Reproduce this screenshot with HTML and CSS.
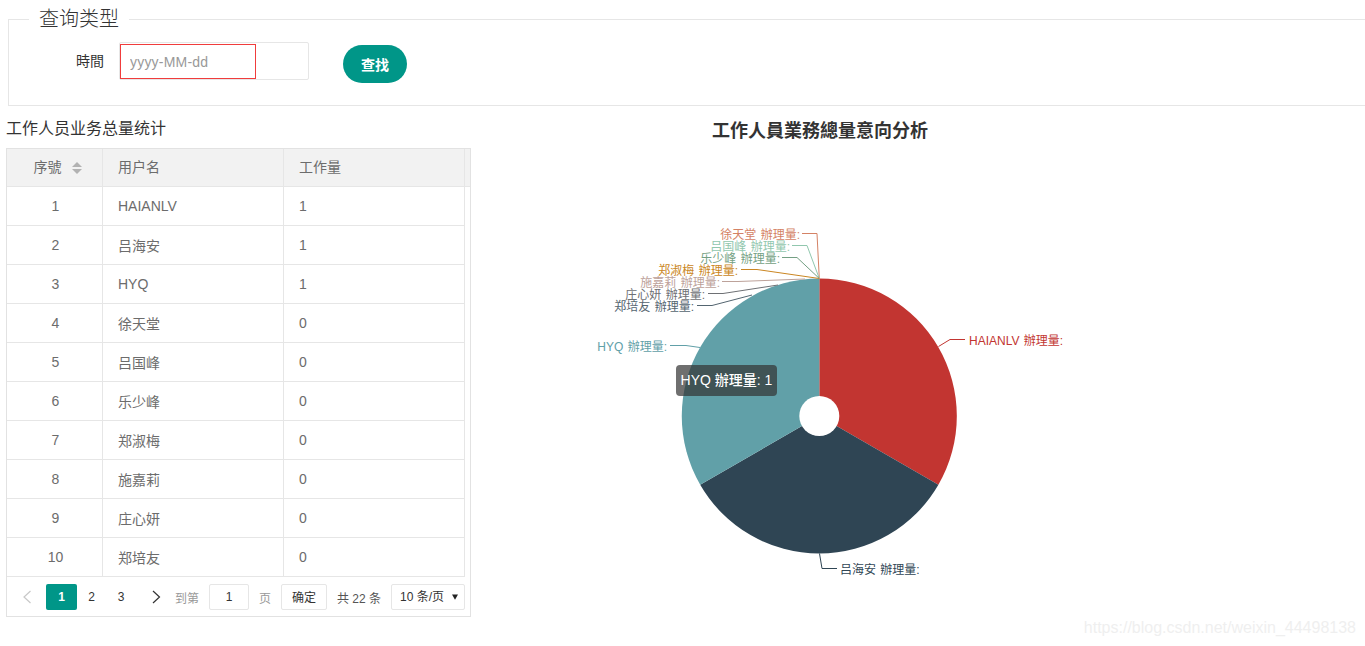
FILE: index.html
```html
<!DOCTYPE html>
<html lang="zh">
<head>
<meta charset="utf-8">
<title>工作人员业务总量统计</title>
<link rel="stylesheet" href="styles.css">
</head>
<body>
<fieldset class="query">
  <legend>查询类型</legend>
  <div class="query-row">
    <label class="query-label">時間</label>
    <div class="date-box"><input class="date-input" placeholder="yyyy-MM-dd"></div>
    <button class="search-btn">查找</button>
  </div>
</fieldset>
<main class="main">
  <section class="left">
    <h2 class="table-title">工作人员业务总量统计</h2>
    <div class="grid">
      <table class="tbl">
        <colgroup><col class="c1"><col class="c2"><col class="c3"><col class="c4"></colgroup>
        <thead>
          <tr>
            <th class="center head-num">序號<svg class="sort" width="10" height="12" viewBox="0 0 10 12"><path d="M5 0 10 5H0Z"/><path d="M5 12 0 7H10Z"/></svg></th>
            <th>用户名</th><th>工作量</th><th class="fill"></th>
          </tr>
        </thead>
        <tbody>
          <tr><td class="center">1</td><td>HAIANLV</td><td>1</td><td class="fill"></td></tr>
          <tr><td class="center">2</td><td>吕海安</td><td>1</td><td class="fill"></td></tr>
          <tr><td class="center">3</td><td>HYQ</td><td>1</td><td class="fill"></td></tr>
          <tr><td class="center">4</td><td>徐天堂</td><td>0</td><td class="fill"></td></tr>
          <tr><td class="center">5</td><td>吕国峰</td><td>0</td><td class="fill"></td></tr>
          <tr><td class="center">6</td><td>乐少峰</td><td>0</td><td class="fill"></td></tr>
          <tr><td class="center">7</td><td>郑淑梅</td><td>0</td><td class="fill"></td></tr>
          <tr><td class="center">8</td><td>施嘉莉</td><td>0</td><td class="fill"></td></tr>
          <tr><td class="center">9</td><td>庄心妍</td><td>0</td><td class="fill"></td></tr>
          <tr><td class="center">10</td><td>郑培友</td><td>0</td><td class="fill"></td></tr>
        </tbody>
      </table>
      <div class="pager">
        <span class="arrow"><svg width="12" height="14" viewBox="0 0 12 14"><path class="chev off" d="M9.500 1 3 7l6.500 6"/></svg></span>
        <span class="page current">1</span>
        <span class="page p2">2</span>
        <span class="page p3">3</span>
        <span class="arrow"><svg width="12" height="14" viewBox="0 0 12 14"><path class="chev" d="M3 1l6.500 6L3 13"/></svg></span>
        <span class="muted goto">到第</span>
        <span class="page-input">1</span>
        <span class="muted unit">页</span>
        <span class="ok">确定</span>
        <span class="total">共 22 条</span>
        <span class="size"><span class="size-text">10 条/页</span><svg class="caret" width="6" height="6" viewBox="0 0 8 7"><path d="M0 0H8L4 7Z"/></svg></span>
      </div>
    </div>
  </section>
  <section class="chart">
    <svg class="chart-svg" width="894" height="540" viewBox="471 106 894 540">
      <text class="chart-title" x="820" y="136.500">工作人員業務總量意向分析</text>
      <path class="s-red" d="M819.3 416V278.500A137.500 137.500 0 0 1 938.400 484.750Z"/>
      <path class="s-dark" d="M819.3 416 938.400 484.750A137.500 137.500 0 0 1 700.200 484.750Z"/>
      <path class="s-teal" d="M819.3 416 700.200 484.750A137.500 137.500 0 0 1 819.300 278.500Z"/>
      <circle class="hole" cx="819.300" cy="416" r="20"/>

      <polyline class="ln l-red" points="965,339.500 950,339.500 938.500,346.500"/>
      <polyline class="ln l-dark" points="837,568.500 822,568.500 819.500,553.500"/>
      <polyline class="ln l-teal" points="670,345.500 686,345.500 700,347.500"/>
      <polyline class="ln l-a" points="802,233.500 817,233.500 819.300,278.500"/>
      <polyline class="ln l-b" points="792,245.500 807,245.500 819.300,278.500"/>
      <polyline class="ln l-c" points="782,257.500 797,257.500 819.300,278.500"/>
      <polyline class="ln l-d" points="741,269.500 757,269.500 819.300,278.500"/>
      <polyline class="ln l-e" points="722,281.500 738,281.500 805,279"/>
      <polyline class="ln l-f" points="708,293.500 723,293.500 778,285"/>
      <polyline class="ln l-g" points="697,305.500 712,305.500 752,295"/>

      <text class="lbl f-red" x="969" y="344.500">HAIANLV 辦理量:</text>
      <text class="lbl f-dark" x="840" y="573.500">吕海安 辦理量:</text>
      <text class="lbl end f-teal" x="667" y="350.500">HYQ 辦理量:</text>
      <text class="lbl end f-a" x="800" y="238.500">徐天堂 辦理量:</text>
      <text class="lbl end f-b" x="790" y="250.500">吕国峰 辦理量:</text>
      <text class="lbl end f-c" x="780" y="262.500">乐少峰 辦理量:</text>
      <text class="lbl end f-d" x="738" y="274.500">郑淑梅 辦理量:</text>
      <text class="lbl end f-e" x="720" y="286.500">施嘉莉 辦理量:</text>
      <text class="lbl end f-f" x="705" y="298.500">庄心妍 辦理量:</text>
      <text class="lbl end f-g" x="694" y="310.500">郑培友 辦理量:</text>
    </svg>
    <div class="tooltip">HYQ 辦理量: 1</div>
  </section>
</main>
<div class="watermark">https://blog.csdn.net/weixin_44498138</div>
</body>
</html>
```
FILE: styles.css
```css
* { box-sizing: border-box; }
html, body { height: 100%; overflow: hidden; }
body {
  margin: 0;
  padding-top: 6px;
  position: relative;
  background: #fff;
  color: #333;
  font-family: "Liberation Sans", "Noto Sans CJK SC", sans-serif;
  font-size: 14px;
}

.query {
  margin: 0 -20px 0 8px;
  padding: 10px 0 22px;
  border: 1px solid #e6e6e6;
  min-width: 0;
}
.query legend {
  margin-left: 20px;
  padding: 0 10px;
  font-size: 20px;
  line-height: 26px;
  font-weight: 300;
}
.query-row { display: flex; align-items: flex-start; }
.query-label {
  width: 95px;
  text-align: right;
  line-height: 38px;
  margin-right: 15px;
}
.date-box {
  width: 190px;
  height: 38px;
  border: 1px solid #e6e6e6;
  border-radius: 2px;
  padding-top: 1px;
}
.date-input {
  display: block;
  width: 136px;
  height: 35px;
  margin-left: 0;
  padding: 0 9px;
  border: 1px solid #f03c3c;
  outline: 0;
  font: 14px "Liberation Sans", sans-serif;
  letter-spacing: .2px;
  color: #333;
}
.date-input::placeholder { color: #999; opacity: 1; }
.search-btn {
  width: 64px;
  height: 38px;
  margin: 3px 0 0 34px;
  border: 0;
  border-radius: 19px;
  background: #009688;
  color: #fff;
  font: bold 14px "Liberation Sans", "Noto Sans CJK SC", sans-serif;
}

.main { display: flex; align-items: flex-start; }
.left { width: 465px; margin-left: 6px; flex: none; }
.table-title {
  margin: 11px 0 9px;
  padding-top: 1px;
  height: 22px;
  font-size: 16px;
  line-height: 22px;
  font-weight: 400;
  color: #333;
}
.grid { width: 465px; border: 1px solid #e2e2e2; }
.tbl {
  width: 463px;
  table-layout: fixed;
  border-collapse: separate;
  border-spacing: 0;
  color: #6c6c6c;
}
.c1 { width: 96px; }
.c2, .c3 { width: 181px; }
.c4 { width: 5px; }
.tbl th, .tbl td {
  padding: 0 15px;
  border-right: 1px solid #e6e6e6;
  border-bottom: 1px solid #e6e6e6;
  font-weight: 400;
  text-align: left;
  overflow: hidden;
}
.tbl th { height: 38px; padding-bottom: 3px; background: #f2f2f2; }
.tbl td { height: 39px; }
.tbl .center { text-align: center; }
.tbl td.center { padding-left: 17px; }
.tbl .head-num { padding-left: 21px; }
.tbl .fill { padding: 0; border-right: 0; }
.tbl td.fill { border-bottom: 0; }
.sort { fill: #b2b2b2; margin-left: 10px; vertical-align: -2px; }

.pager {
  display: flex;
  align-items: center;
  height: 39px;
  padding: 7px 5px 6px 0;
  font-size: 12px;
  color: #333;
}
.arrow { width: 39px; display: flex; justify-content: center; }
.chev { fill: none; stroke: #333; stroke-width: 1.2; }
.chev.off { stroke: #c8c8c8; }
.page { height: 26px; line-height: 26px; text-align: center; }
.current {
  width: 31px;
  background: #009688;
  border-radius: 2px;
  color: #fff;
  font-weight: 700;
}
.p2 { width: 29px; }
.p3 { width: 30px; }
.muted { color: #999; }
.goto, .unit { margin-right: 10px; }
.page-input, .ok, .size {
  height: 26px;
  border: 1px solid #e6e6e6;
  border-radius: 2px;
  background: #fff;
}
.page-input { width: 40px; margin-right: 10px; line-height: 24px; text-align: center; }
.ok { width: 46px; line-height: 26px; text-align: center; }
.total { margin-left: 10px; color: #555; }
.size {
  width: 74px;
  margin-left: auto;
  padding-left: 8px;
  display: flex;
  align-items: center;
  justify-content: space-between;
  padding-right: 6px;
}
.size-text { line-height: 26px; }
.caret { fill: #222; }

.chart { position: relative; flex: 1; height: 540px; }
.chart-svg { display: block; }
.chart-title {
  font-size: 18px;
  font-weight: 700;
  fill: #333;
  text-anchor: middle;
}
.s-red { fill: #c23531; }
.s-dark { fill: #2f4554; }
.s-teal { fill: #61a0a8; }
.hole { fill: #fff; }
.ln { fill: none; stroke-width: 1; }
.lbl { font-size: 12px; word-spacing: 1px; }
.end { text-anchor: end; }
.l-red { stroke: #c23531; } .f-red { fill: #c23531; }
.l-dark { stroke: #2f4554; } .f-dark { fill: #2f4554; }
.l-teal { stroke: #61a0a8; } .f-teal { fill: #61a0a8; }
.l-a { stroke: #d48265; } .f-a { fill: #d48265; }
.l-b { stroke: #91c7ae; } .f-b { fill: #91c7ae; }
.l-c { stroke: #749f83; } .f-c { fill: #749f83; }
.l-d { stroke: #ca8622; } .f-d { fill: #ca8622; }
.l-e { stroke: #bda29a; } .f-e { fill: #bda29a; }
.l-f { stroke: #6e7074; } .f-f { fill: #6e7074; }
.l-g { stroke: #546570; } .f-g { fill: #546570; }

.tooltip {
  position: absolute;
  left: 205px;
  top: 259px;
  width: 101px;
  height: 31px;
  line-height: 31px;
  text-align: center;
  border-radius: 4px;
  background: rgba(50, 50, 50, .7);
  color: #fff;
  font-size: 14px;
  font-weight: 500;
  white-space: nowrap;
}

.watermark {
  position: absolute;
  right: 9px;
  top: 617px;
  font-size: 16px;
  line-height: 22px;
  color: #efefef;
  white-space: nowrap;
}
```
